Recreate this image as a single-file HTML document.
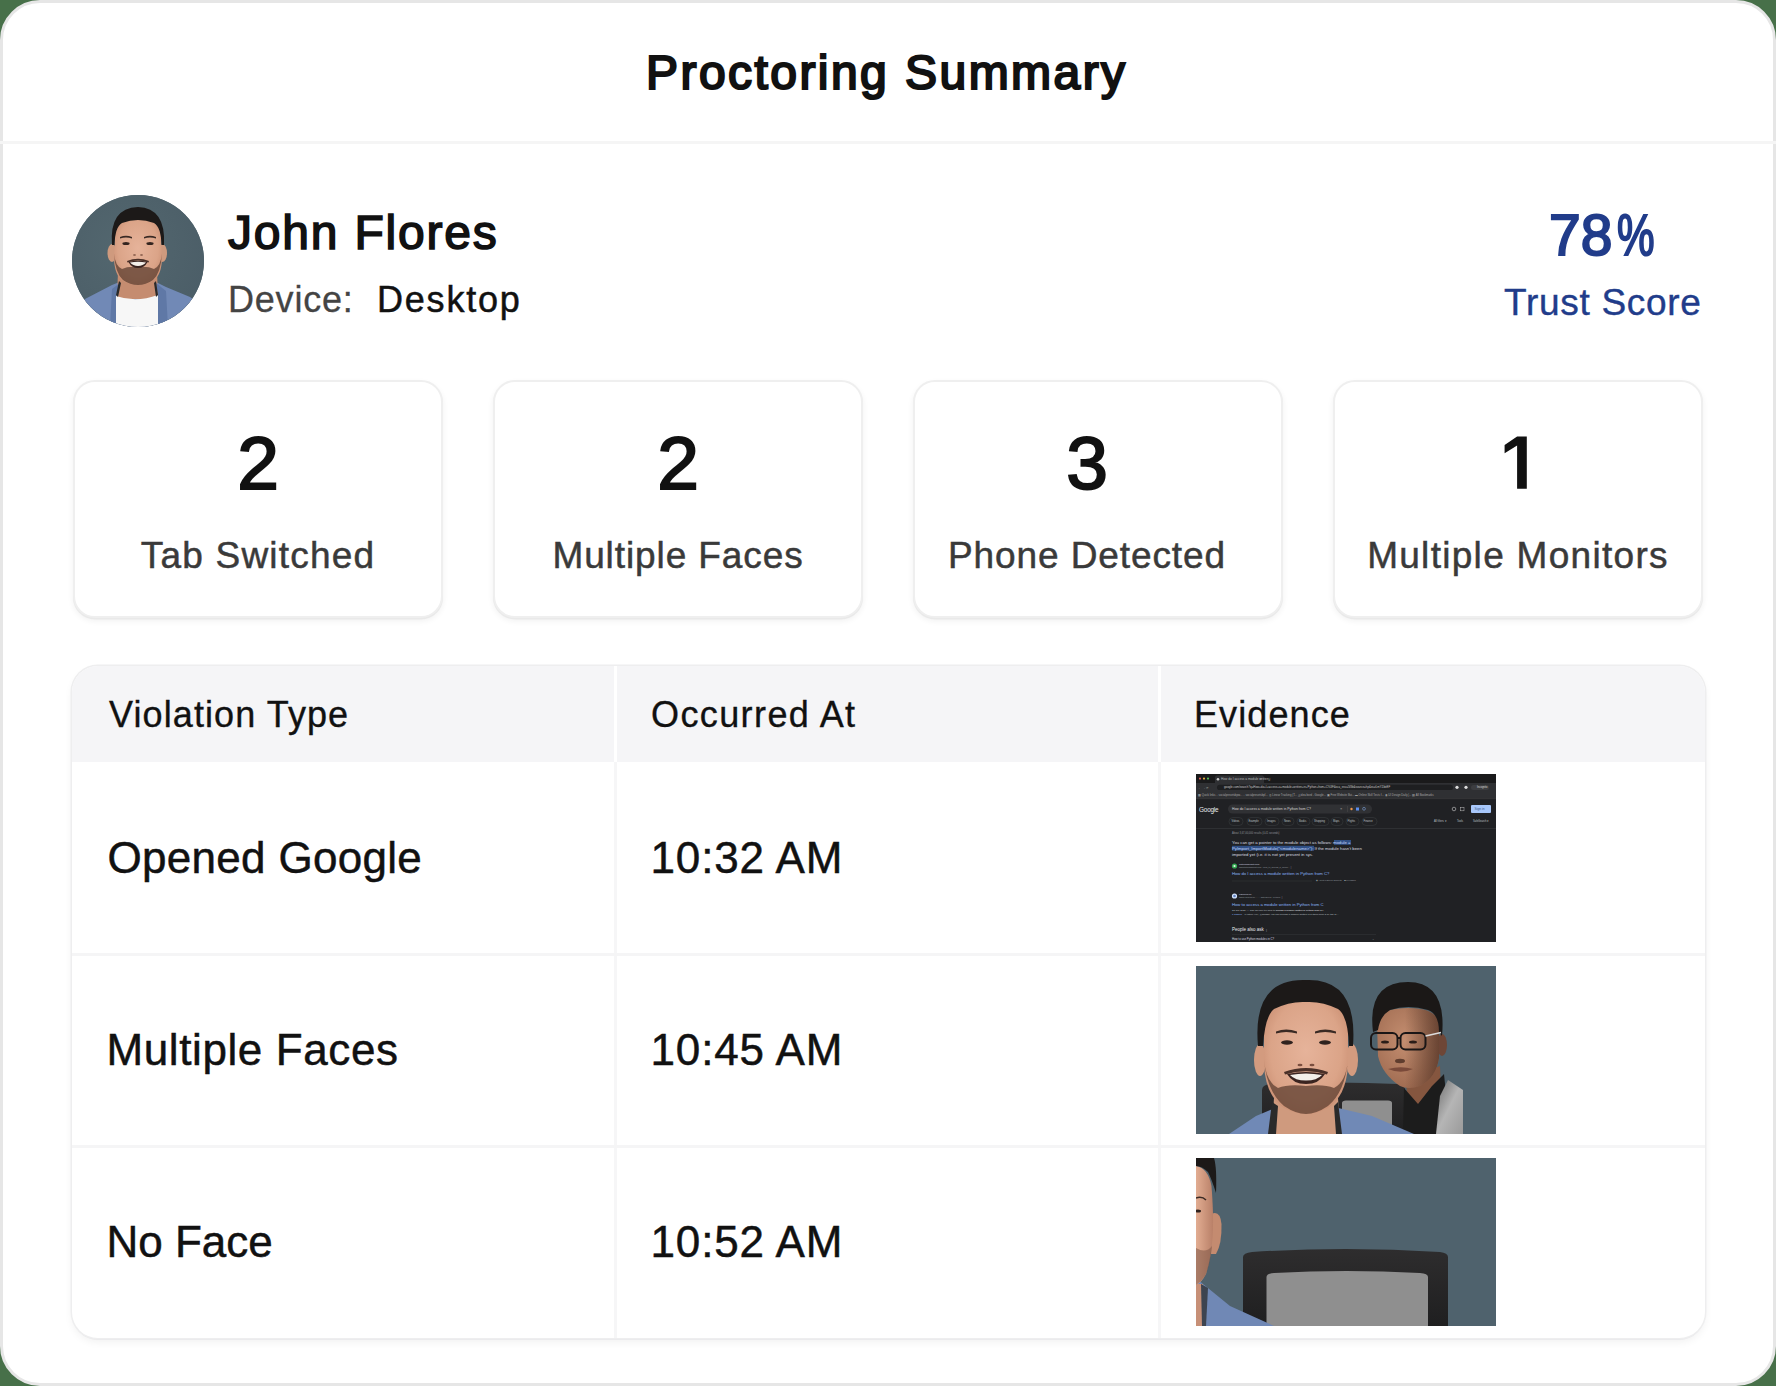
<!DOCTYPE html>
<html><head><meta charset="utf-8">
<style>
*{margin:0;padding:0;box-sizing:border-box}
html,body{width:1776px;height:1386px;overflow:hidden;background:#477049;font-family:"Liberation Sans",sans-serif}
.card{position:absolute;left:0;top:0;width:1776px;height:1386px;background:#fff;border:3px solid #e6e6e6;border-radius:40px}
.sep{position:absolute;left:0;top:141px;width:1776px;height:3px;background:#f5f5f5}
.t{position:absolute;white-space:nowrap;line-height:1}
.title{left:646px;top:49px;font-size:48px;font-weight:normal;-webkit-text-stroke:2.2px #111;color:#111;letter-spacing:2.45px}
.name{left:228px;top:209px;font-size:48px;font-weight:normal;-webkit-text-stroke:1.6px #111;color:#111;letter-spacing:1.8px}
.dev{left:228px;top:282px;font-size:36px;color:#444;letter-spacing:0.8px;-webkit-text-stroke:0.3px #444}
.desk{left:377px;top:282px;font-size:36px;color:#111;-webkit-text-stroke:0.5px #111;letter-spacing:1.8px}
.score{left:1549px;top:207px;font-size:57px;font-weight:normal;-webkit-text-stroke:2px #213c8a;color:#213c8a;letter-spacing:0px}
.trust{left:1504px;top:284px;font-size:37px;color:#213c8a;letter-spacing:0.7px;-webkit-text-stroke:0.4px #213c8a}
.avatar{position:absolute;left:72px;top:195px;width:132px;height:132px;border-radius:50%;overflow:hidden;background:#4f636e}
.stat{position:absolute;top:380px;width:370px;height:238px;background:#fff;border:2px solid #efefef;border-radius:22px;box-shadow:0 1.5px 0 0 #e9e9e9,0 3px 6px rgba(0,0,0,0.06)}
.stat .n{position:absolute;left:0;width:100%;text-align:center;top:44px;font-size:75px;font-weight:normal;-webkit-text-stroke:2px #111;color:#111;line-height:1}
.stat .l{position:absolute;left:0;width:100%;text-align:center;top:155px;font-size:37px;color:#3a3a3a;line-height:1;letter-spacing:0.9px;-webkit-text-stroke:0.5px #3a3a3a}
.table{position:absolute;left:72px;top:666px;width:1633px;height:672px;background:#fff;border-radius:26px;box-shadow:0 0 0 1.5px #eeeeef,0 2px 0 0 #e9e9eb,0 4px 8px rgba(0,0,0,0.06);overflow:hidden}
.hdr{position:absolute;left:0;top:0;width:100%;height:96px;background:#f5f5f7}
.vd{position:absolute;top:0;width:3px;height:672px;background:#f6f6f7}
.vdh{position:absolute;top:0;width:3px;height:96px;background:#fff}
.hd{position:absolute;top:31px;font-size:36px;color:#111;letter-spacing:1.1px;-webkit-text-stroke:0.35px #111;line-height:1}
.rd{position:absolute;left:0;width:100%;height:3px;background:#f5f5f6}
.cell{position:absolute;margin-left:-2.5px;font-size:44px;color:#111;letter-spacing:0.3px;-webkit-text-stroke:0.5px #111;line-height:1}
.ev{position:absolute;left:1124px;width:300px;height:168px;overflow:hidden}
</style></head><body>
<div class="card">
</div>
<div class="sep"></div>
<div class="t title">Proctoring Summary</div>
<div class="avatar"><svg width="132" height="132" viewBox="0 0 132 132">
<defs><radialGradient id="abg" cx="0.4" cy="0.4" r="0.8"><stop offset="0" stop-color="#53676f"/><stop offset="1" stop-color="#4a5c66"/></radialGradient>
<radialGradient id="ask" cx="0.5" cy="0.45" r="0.6"><stop offset="0" stop-color="#e6b39a"/><stop offset="0.7" stop-color="#dba488"/><stop offset="1" stop-color="#c98e72"/></radialGradient></defs>
<rect width="132" height="132" fill="url(#abg)"/>
<path d="M13 104 L40 90 L50 86 L82 86 L94 92 L118 102 L132 112 L132 132 L0 132 L0 118Z" fill="#7189b6"/>
<path d="M46 76 L45 104 L86 104 L85 76Z" fill="#c58c70"/>
<path d="M44 101 Q64 108 86 100 L86 132 L44 132Z" fill="#f7f7f7"/>
<path d="M44 132 L44 100 L48 88 L40 94 L38 132Z" fill="#5f78a6"/>
<path d="M86 132 L86 100 L84 88 L94 96 L96 132Z" fill="#5f78a6"/>
<path d="M44 100 L47 86 L49 88 L46 102Z M86 100 L84 86 L82 88 L84 102Z" fill="#2a2a2a"/>
<ellipse cx="40" cy="58" rx="4.5" ry="9" fill="#cf9a7e"/>
<ellipse cx="90.5" cy="58" rx="4.5" ry="9" fill="#cf9a7e"/>
<path d="M43 40 Q44 24 66 23 Q88 24 89 40 L90 62 Q90 80 81 86 Q73 90 66 90 Q58 90 51 86 Q42 80 42 62Z" fill="url(#ask)"/>
<path d="M42 58 Q43 78 51 85 Q58 90 66 90 Q74 90 81 85 Q89 78 90 58 Q89 71 82 74 Q76 71 66 72 Q56 71 50 74 Q43 71 42 58Z" fill="#654536" opacity="0.8"/>
<path d="M55 66 Q66 61.5 77 66 L76.5 67.5 Q66 63.5 55.5 67.5Z" fill="#4a3028"/>
<path d="M56.5 67 Q66 64.5 75.5 67 Q72.5 73 66 73 Q59.5 73 56.5 67Z" fill="#3a2420"/>
<path d="M58 67.6 Q66 65.8 74 67.6 Q71 71 66 71 Q61 71 58 67.6Z" fill="#f3efe9"/>
<path d="M40 50 Q37 13 66 12 Q94 13 92 50 L89.5 50 Q89 32 82 28 Q66 22 50 28 Q43 32 42.5 50Z" fill="#1c1918"/>
<path d="M48 42 Q54 39.5 60 42 L60 43.5 Q54 41.5 48 43.5Z" fill="#3a2a24"/>
<path d="M72 42 Q78 39.5 84 42 L84 43.5 Q78 41.5 72 43.5Z" fill="#3a2a24"/>
<ellipse cx="54" cy="48.5" rx="3.6" ry="1.5" fill="#33241f"/>
<ellipse cx="78" cy="48.5" rx="3.6" ry="1.5" fill="#33241f"/>
<ellipse cx="62.5" cy="60" rx="1.5" ry="0.8" fill="#7a4e3e"/><ellipse cx="69.5" cy="60" rx="1.5" ry="0.8" fill="#7a4e3e"/>
</svg></div>
<div class="t name">John Flores</div>
<div class="t dev">Device:</div>
<div class="t desk">Desktop</div>
<div class="t score">78<span style="display:inline-block;transform:scaleX(0.74);transform-origin:0 0;margin-left:5px">%</span></div>
<div class="t trust">Trust Score</div>

<div class="stat" style="left:73px"><div class="n">2</div><div class="l" style="letter-spacing:1.2px;left:0px">Tab Switched</div></div>
<div class="stat" style="left:493px"><div class="n">2</div><div class="l">Multiple Faces</div></div>
<div class="stat" style="left:913px"><div class="n" style="left:-11px">3</div><div class="l" style="left:-11px">Phone Detected</div></div>
<div class="stat" style="left:1333px"><svg style="position:absolute;left:165px;top:48px" width="35" height="65" viewBox="0 0 35 65"><path d="M17.1 6.6 H26.8 V58.8 H17.1 V15.6 L4.6 23.2 V15 Z" fill="#111"/></svg><div class="l" style="letter-spacing:1.3px;left:0px">Multiple Monitors</div></div>

<div class="table">
  <div class="hdr"></div>
  <div class="vd" style="left:542px"></div>
  <div class="vd" style="left:1086px"></div>
  <div class="vdh" style="left:542px"></div>
  <div class="vdh" style="left:1086px"></div>
  <div class="rd" style="top:287px"></div>
  <div class="rd" style="top:479px"></div>
  <div class="hd" style="left:37px">Violation Type</div>
  <div class="hd" style="left:579px;letter-spacing:1.4px">Occurred At</div>
  <div class="hd" style="left:1122px">Evidence</div>
  <div class="cell" style="left:37px;top:170px;margin-left:-1.5px">Opened Google</div>
  <div class="cell" style="left:581px;top:170px;letter-spacing:0.85px">10:32 AM</div>
  <div class="cell" style="left:37px;top:362px;letter-spacing:0.6px">Multiple Faces</div>
  <div class="cell" style="left:581px;top:362px;letter-spacing:0.85px">10:45 AM</div>
  <div class="cell" style="left:37px;top:554px;letter-spacing:0px">No Face</div>
  <div class="cell" style="left:581px;top:554px;letter-spacing:0.85px">10:52 AM</div>
  <div class="ev" style="top:108px"><svg width="300" height="168" viewBox="0 0 300 168" font-family="Liberation Sans">
<rect width="300" height="168" fill="#202124"/>
<rect width="300" height="9" fill="#1a1a1b"/>
<path d="M19 9 L19 3.5 Q19 1.5 21 1.5 L66 1.5 Q68 1.5 68 3.5 L68 9Z" fill="#2f3033"/>
<circle cx="4" cy="4.6" r="1.1" fill="#dd5f57"/><circle cx="8" cy="4.6" r="1.1" fill="#e0b040"/><circle cx="12" cy="4.6" r="1.1" fill="#55bb55"/>
<circle cx="22" cy="5.2" r="1.3" fill="#c9c9c9"/>
<text x="25" y="6.4" font-size="3.2" fill="#bdbdbd">How do I access a module written i</text>
<text x="64" y="6.4" font-size="3.2" fill="#aaa">×</text><text x="72" y="6.6" font-size="4" fill="#aaa">+</text>
<rect y="9" width="300" height="16" fill="#2f3033"/>
<rect x="21" y="10.7" width="236" height="5.4" rx="2.7" fill="#1e1f21"/>
<text x="2" y="14.6" font-size="3.2" fill="#9a9a9a">←  →  ⟳</text>
<text x="28" y="14.4" font-size="2.9" fill="#c8c8c8">google.com/search?q=How+do+I+access+a+module+written+in+Python+from+C%3F&amp;sca_esv=5f3b&amp;source=hp&amp;ei=tLmYZdeEF</text>
<circle cx="261" cy="13.3" r="1.6" fill="#ddd"/><circle cx="270" cy="13.3" r="1.6" fill="#ddd"/>
<rect x="275" y="11" width="18" height="5" rx="2.5" fill="#3c3d40"/><text x="281" y="14.4" font-size="2.6" fill="#ddd">Incognito</text>
<text x="2" y="21.5" font-size="2.8" fill="#a8a8a8">▦ Quick links   ⌂ socialpresetsbpw...   ⌂ socialpresetsbpl...   ◎ Linear Tracking (T...   ◬ idea bord - Google...   ▣ Free Website Bui...   ▬ Online Skill Tests f...   ◉ UI Design Daily |...            ▤ All Bookmarks</text>
<rect y="24.6" width="300" height="0.5" fill="#3a3a3a"/>
<text x="3" y="38" font-size="6.4" fill="#e8eaed" letter-spacing="-0.2">Google</text>
<rect x="32" y="30.5" width="144" height="9" rx="4.5" fill="#303134"/>
<text x="36" y="36.2" font-size="3.4" fill="#d8d8d8">How do I access a module written in Python from C?</text>
<text x="144" y="36.4" font-size="4" fill="#aaa">×</text><rect x="151" y="32" width="0.4" height="6" fill="#555"/>
<circle cx="155.5" cy="35" r="1.2" fill="#f2994a"/><rect x="160" y="33.5" width="3" height="3" fill="#5a8ef0"/><circle cx="168" cy="34.8" r="1.4" fill="none" stroke="#8ab4f8" stroke-width="0.5"/>
<circle cx="258" cy="35" r="1.8" fill="none" stroke="#ccc" stroke-width="0.6"/><rect x="264.5" y="33.3" width="3.5" height="3.5" fill="none" stroke="#bbb" stroke-width="0.5"/>
<rect x="275" y="31" width="20" height="8" rx="1" fill="#a8c7fa"/><text x="278.5" y="36.2" font-size="3.3" fill="#3d5a8c">Sign in</text>
<g fill="none" stroke="#3c4043" stroke-width="0.5">
<rect x="33" y="43.5" width="14" height="8" rx="4"/><rect x="51" y="43.5" width="15" height="8" rx="4"/><rect x="69" y="43.5" width="14" height="8" rx="4"/><rect x="86" y="43.5" width="12" height="8" rx="4"/><rect x="101" y="43.5" width="13" height="8" rx="4"/><rect x="116" y="43.5" width="17" height="8" rx="4"/><rect x="135" y="43.5" width="12" height="8" rx="4"/><rect x="150" y="43.5" width="13" height="8" rx="4"/><rect x="166" y="43.5" width="15" height="8" rx="4"/>
</g>
<g font-size="2.6" fill="#bdc1c6">
<text x="35.5" y="48.4">Videos</text><text x="52.5" y="48.4">Example</text><text x="71" y="48.4">Images</text><text x="88" y="48.4">News</text><text x="103" y="48.4">Books</text><text x="118" y="48.4">Shopping</text><text x="137" y="48.4">Maps</text><text x="151.5" y="48.4">Flights</text><text x="167.5" y="48.4">Finance</text>
<text x="238" y="48.4">All filters ▾</text><text x="261" y="48.4">Tools</text><text x="277" y="48.4">SafeSearch ▾</text>
</g>
<rect y="54" width="300" height="0.5" fill="#3c4043"/>
<text x="36" y="60.2" font-size="2.6" fill="#8e9297">About 3,67,00,000 results (0.41 seconds)</text>
<rect x="138" y="66" width="17" height="4.8" fill="#2f4f86"/><rect x="36" y="71.8" width="82" height="4.8" fill="#2f4f86"/>
<g font-size="4.24" fill="#dadce0">
<text x="36" y="69.6">You can get a pointer to the module object as follows: <tspan fill="#c4d7fb">module =</tspan></text>
<text x="36" y="75.6"><tspan fill="#c4d7fb">PyImport_ImportModule("&lt;modulename&gt;");</tspan> If the module hasn't been</text>
<text x="36" y="81.6">imported yet (i.e. it is not yet present in sys.</text>
</g>
<circle cx="38.5" cy="92" r="2.6" fill="#34a853"/><circle cx="38.5" cy="92" r="1.1" fill="#e8f5e9"/>
<text x="43" y="90.6" font-size="2.5" fill="#dadce0">Tutorialspoint.com</text><text x="43" y="93.8" font-size="2.2" fill="#9aa0a6">www.tutorialspoint.com › how_to_access_a_modul...  ⋮</text>
<text x="36" y="100.6" font-size="4.2" fill="#8ab4f8">How do I access a module written in Python from C?</text>
<rect x="36" y="106.8" width="80" height="0.4" fill="#3c4043"/>
<text x="120" y="107.4" font-size="2.2" fill="#9aa0a6">◉ About featured snippets  ·  ▣ Feedback</text>
<circle cx="38.5" cy="122" r="2.6" fill="#d2e3fc"/><circle cx="38.5" cy="122" r="1.3" fill="#5f7fbf"/>
<text x="43" y="120.6" font-size="2.5" fill="#dadce0">edureka.co</text><text x="43" y="123.8" font-size="2.2" fill="#9aa0a6">www.edureka.co › ... › Categories › Python  ⋮</text>
<text x="36" y="131.8" font-size="4.2" fill="#8ab4f8">How to access a module written in Python from C</text>
<text x="36" y="136.8" font-size="2.5" fill="#bdc1c6">28 Jun 2020 — Can anyone tell how to <tspan fill="#e8eaed">access a module written in Python from C</tspan>?</text>
<text x="36" y="141.4" font-size="2.5" fill="#bdc1c6"><tspan fill="#8ab4f8">1 answer</tspan> · 0 votes: Hey, @Roshni You can access a module written in Python from C by the fo...</text>
<text x="36" y="156.6" font-size="4.5" fill="#e8eaed">People also ask  <tspan font-size="3" fill="#9aa0a6">⋮</tspan></text>
<rect x="36" y="160" width="144" height="0.4" fill="#3c4043"/>
<text x="36" y="166" font-size="2.8" fill="#dadce0">How to use Python modules in C?</text><text x="176" y="166" font-size="3" fill="#9aa0a6">⌄</text>
</svg></div>
  <div class="ev" style="top:300px"><svg width="300" height="168" viewBox="0 0 300 168">
<defs>
<radialGradient id="sk1" cx="0.5" cy="0.45" r="0.6"><stop offset="0" stop-color="#e6b39a"/><stop offset="0.7" stop-color="#dba488"/><stop offset="1" stop-color="#c98e72"/></radialGradient>
<radialGradient id="sk2" cx="0.45" cy="0.4" r="0.65"><stop offset="0" stop-color="#c48e70"/><stop offset="1" stop-color="#9e6a50"/></radialGradient>
</defs>
<rect width="300" height="168" fill="#4f626d"/>
<path d="M66 168 L66 124 Q66 119 74 118 Q140 115 202 118 Q209 119 209 124 L209 168Z" fill="url(#ch3)"/>
<path d="M146 168 L146 137 Q146 134.5 150 134.5 L192 134.5 Q196 134.5 196 137 L196 168Z" fill="#8f8f8f"/>
<linearGradient id="sh2" x1="0" y1="0" x2="1" y2="0"><stop offset="0.45" stop-color="#3a2218" stop-opacity="0"/><stop offset="1" stop-color="#3a2218" stop-opacity="0.55"/></linearGradient>
<linearGradient id="jk2" x1="0" y1="0" x2="1" y2="1"><stop offset="0" stop-color="#6a6a6a"/><stop offset="0.5" stop-color="#b5b5b5"/><stop offset="1" stop-color="#9a9a9a"/></linearGradient>
<ellipse cx="246" cy="79" rx="5" ry="11" fill="#6e4636"/>
<path d="M210 112 L244 100 L246 150 L212 150Z" fill="#85563f"/>
<path d="M207 168 L208 122 L222 138 L236 120 L248 108 L254 168Z" fill="#1c1c1c"/>
<path d="M240 168 L244 130 L252 114 L267 124 L267 168Z" fill="url(#jk2)"/>
<path d="M181 58 Q182 42 212 42 Q243 42 243 60 L243 92 Q240 112 224 120 Q212 124 204 120 Q186 108 182 90Z" fill="url(#sk2)"/>
<path d="M181 58 Q182 42 212 42 Q243 42 243 60 L243 92 Q240 112 224 120 Q212 124 204 120 Q186 108 182 90Z" fill="url(#sh2)"/>
<path d="M177 66 Q171 16 212 16 Q251 16 246 70 L243 66 Q243 48 232 44 Q212 38 194 44 Q184 50 182 64Z" fill="#1b1817"/>
<g fill="none" stroke="#1a1616" stroke-width="2"><rect x="175" y="67" width="26.5" height="16.5" rx="5"/><rect x="204.5" y="67" width="25" height="16.5" rx="5"/><path d="M201.5 72 L204.5 72"/></g>
<path d="M229.5 70 L245 66.6" stroke="#dcdcdc" stroke-width="1.5"/>
<ellipse cx="189" cy="76" rx="4" ry="1.6" fill="#2a1d18"/><ellipse cx="217" cy="76" rx="4" ry="1.6" fill="#2a1d18"/>
<ellipse cx="204" cy="95" rx="5" ry="2.2" fill="#4a2d22" opacity="0.8"/>
<path d="M192 103 Q205 99.5 217 103 Q205 108.5 192 103Z" fill="#7a4a3a"/>
<path d="M33 168 L60 150 L84 140 L134 140 L176 150 L218 168Z" fill="#7089b6"/>
<path d="M76 168 L78 132 L142 132 L144 168Z" fill="#cf9a7e"/>
<path d="M72 168 L76 136 L82 140 L80 168Z M146 168 L142 136 L138 140 L140 168Z" fill="#2a2a2a"/>
<ellipse cx="64" cy="94" rx="6" ry="16" fill="#d39b7f"/>
<ellipse cx="156" cy="94" rx="6" ry="16" fill="#d39b7f"/>
<path d="M68 62 Q70 34 110 32 Q150 34 152 62 L152 100 Q150 130 132 142 Q120 148 110 148 Q100 148 88 142 Q70 130 68 100Z" fill="url(#sk1)"/>
<path d="M68 94 Q71 126 88 140 Q100 148 110 148 Q120 148 132 140 Q149 126 152 94 Q150 116 138 122 Q128 118 110 120 Q92 118 82 122 Q70 116 68 94Z" fill="#654536" opacity="0.8"/>
<path d="M88 106 Q110 98 132 106 L131 108.5 Q110 102 89 108.5Z" fill="#4a3028"/>
<path d="M91 108 Q110 104 129 108 Q123 118 110 118 Q97 118 91 108Z" fill="#3a2420"/>
<path d="M94 109 Q110 106 126 109 Q121 114.5 110 114.5 Q99 114.5 94 109Z" fill="#f3efe9"/>
<path d="M62 80 Q56 12 110 14 Q162 12 157 80 L153 80 Q152 50 142 43 Q126 35 110 36 Q94 35 78 43 Q69 50 67 80Z" fill="#1c1918"/>
<path d="M80 65.5 Q90 61.5 101 65.5 L101 67.5 Q90 64.5 80 67.5Z" fill="#3a2a24"/>
<path d="M119 65.5 Q129 61.5 140 65.5 L140 67.5 Q129 64.5 119 67.5Z" fill="#3a2a24"/>
<ellipse cx="91" cy="76.5" rx="6" ry="2.2" fill="#2f221e"/>
<ellipse cx="129" cy="76.5" rx="6" ry="2.2" fill="#2f221e"/>
<ellipse cx="104" cy="99" rx="2.5" ry="1.3" fill="#7a4e3e"/><ellipse cx="116" cy="99" rx="2.5" ry="1.3" fill="#7a4e3e"/>
</svg></div>
  <div class="ev" style="top:492px"><svg width="300" height="168" viewBox="0 0 300 168">
<defs><linearGradient id="ch3" x1="0" y1="0" x2="0" y2="1"><stop offset="0" stop-color="#2e2d2e"/><stop offset="1" stop-color="#1f1f20"/></linearGradient>
<linearGradient id="fc3" x1="0" y1="0" x2="1" y2="0"><stop offset="0" stop-color="#e2ad92"/><stop offset="1" stop-color="#b98068"/></linearGradient></defs>
<rect width="300" height="168" fill="#4f626d"/>
<path d="M47 168 L47 99 Q47 95 56 94 Q150 88 244 94 Q252 95 252 99 L252 168Z" fill="url(#ch3)"/>
<path d="M70.5 168 L70.5 119 Q70.5 115.5 78 115 Q150 111 224 115 Q232 115.5 232 119 L232 168Z" fill="#8f8f8f"/>
<path d="M0 168 L0 120 L7 126 L34 148 L78 168Z" fill="#7088b5"/>
<path d="M0 126 L0 168 L7 168 L7 126Z" fill="#c79077"/>
<path d="M5 126 L12 130 L10 168 L6 168Z" fill="#3d4450"/>
<path d="M15.5 56 Q24 52 25.5 66 Q26 86 20 96 L15 96Z" fill="#c48b70"/>
<path d="M0 8 Q12 10 15.5 28 Q18 60 16.5 80 Q15 100 10 116 Q6 124 0 127Z" fill="url(#fc3)"/>
<path d="M0 90 Q10 96 16 88 Q14 108 9 118 Q5 124 0 127Z" fill="#7d5645" opacity="0.55"/>
<path d="M0 0 L18 0 Q21 10 20 35 Q16 22 12 14 Q6 8 0 8Z" fill="#1c1918"/>
<path d="M0 40 Q6 38 10 42" stroke="#3a2a24" stroke-width="1.5" fill="none"/>
<ellipse cx="2" cy="53" rx="3" ry="1.5" fill="#2f221e"/>
</svg></div>
</div>
</body></html>
